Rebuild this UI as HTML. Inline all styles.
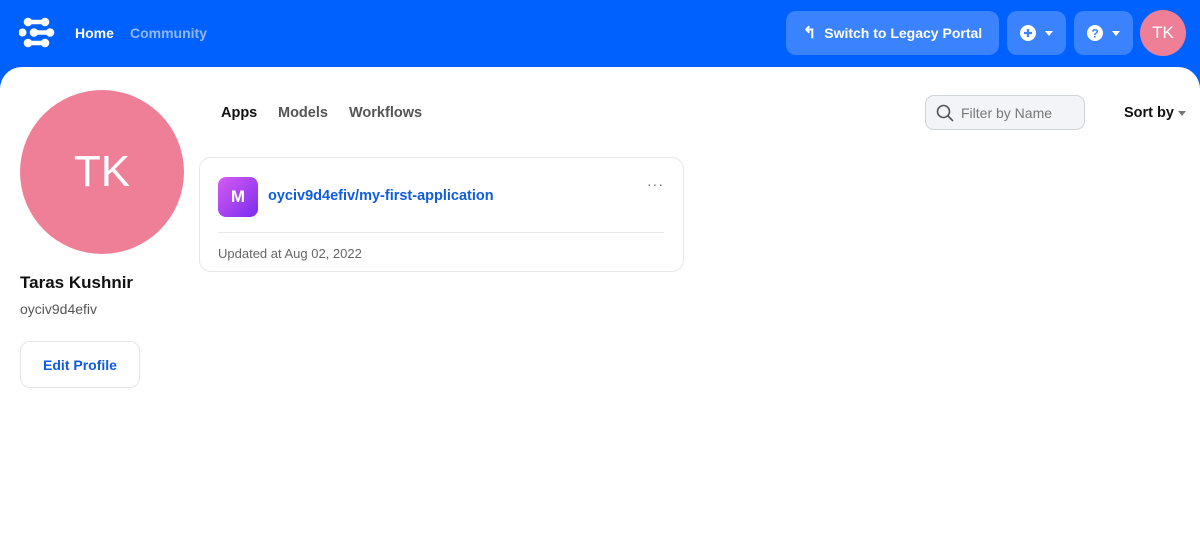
<!DOCTYPE html>
<html><head><style>
*{box-sizing:border-box;margin:0;padding:0}
body{width:1200px;height:560px;overflow:hidden;background:#0061ff;font-family:"Liberation Sans",sans-serif;position:relative}
.main{position:absolute;left:0;top:67px;width:1200px;height:493px;background:#fff;border-radius:22px 22px 0 0}
.a{position:absolute}
.btn{position:absolute;top:11px;height:44px;background:#3b82ff;border-radius:10px;color:#fff;font-weight:bold;font-size:14px;display:flex;align-items:center;justify-content:center}
.caret{width:0;height:0;border-left:4px solid transparent;border-right:4px solid transparent;border-top:5px solid #fff;margin-left:9px}
</style></head><body>
<svg class="a" style="left:19px;top:17px" width="36" height="32" viewBox="0 0 36 32" fill="#fff" stroke="#fff">
<circle cx="9" cy="5" r="3.8"/><circle cx="26" cy="5" r="3.8"/><path d="M9 5H26" stroke-width="4.5"/>
<circle cx="3.5" cy="15.5" r="3.5"/><circle cx="15" cy="15.5" r="3.8"/><circle cx="31" cy="15.5" r="3.8"/><path d="M15 15.5H31" stroke-width="4.5"/>
<circle cx="9" cy="26" r="3.8"/><circle cx="26" cy="26" r="3.8"/><path d="M9 26H26" stroke-width="4.5"/>
</svg>
<div class="a" style="left:75px;top:25px;color:#fff;font-weight:bold;font-size:14px">Home</div>
<div class="a" style="left:130px;top:25px;color:#8fb8ff;font-weight:bold;font-size:14px">Community</div>
<div class="btn" style="left:786px;width:213px"><span style="font-size:16px;margin-right:8px">↰</span>Switch to Legacy Portal</div>
<div class="btn" style="left:1007px;width:59px"><svg width="16" height="16" viewBox="0 0 16 16"><circle cx="8" cy="8" r="8" fill="#fff"/><path d="M8 4v8M4 8h8" stroke="#3b82ff" stroke-width="2.2"/></svg><span class="caret"></span></div>
<div class="btn" style="left:1074px;width:59px"><svg width="16" height="16" viewBox="0 0 16 16"><circle cx="8" cy="8" r="8" fill="#fff"/><text x="8" y="12.5" text-anchor="middle" font-size="12" font-weight="bold" fill="#3b82ff" font-family="Liberation Sans">?</text></svg><span class="caret"></span></div>
<div class="a" style="left:1140px;top:10px;width:46px;height:46px;border-radius:50%;background:#ee7f97;color:#fff;font-size:17px;display:flex;align-items:center;justify-content:center">TK</div>
<div class="main"></div>
<div class="a" style="left:20px;top:90px;width:164px;height:164px;border-radius:50%;background:#ee7f97;color:#fff;font-size:44px;display:flex;align-items:center;justify-content:center">TK</div>
<div class="a" style="left:20px;top:273px;font-size:17px;font-weight:bold;color:#111">Taras Kushnir</div>
<div class="a" style="left:20px;top:301px;font-size:14px;color:#555">oyciv9d4efiv</div>
<div class="a" style="left:20px;top:341px;width:120px;height:47px;border:1px solid #e3e5ea;border-radius:10px;color:#0f5ce0;font-weight:bold;font-size:14px;display:flex;align-items:center;justify-content:center">Edit Profile</div>
<div class="a" style="left:221px;top:105px;font-size:14.5px;font-weight:bold;color:#111">Apps</div>
<div class="a" style="left:278px;top:105px;font-size:14.5px;font-weight:bold;color:#555">Models</div>
<div class="a" style="left:349px;top:105px;font-size:14.5px;font-weight:bold;color:#555">Workflows</div>
<div class="a" style="left:925px;top:95px;width:160px;height:35px;border:1px solid #cfd3da;border-radius:9px;background:#f3f4f7;display:flex;align-items:center;padding-left:10px;color:#777;font-size:14px">
<svg width="18" height="18" viewBox="0 0 18 18" style="margin-right:7px"><circle cx="7.5" cy="7.5" r="6" fill="none" stroke="#555" stroke-width="1.6"/><path d="M12 12l5 5" stroke="#555" stroke-width="1.6"/></svg>Filter by Name</div>
<div class="a" style="left:1124px;top:105px;font-size:14.5px;font-weight:bold;color:#111">Sort by</div>
<div class="a" style="left:1178px;top:111px;border-left:4px solid transparent;border-right:4px solid transparent;border-top:5px solid #777"></div>
<div class="a" style="left:199px;top:157px;width:485px;height:115px;border:1px solid #e5e7eb;border-radius:12px"></div>
<div class="a" style="left:218px;top:177px;width:40px;height:40px;border-radius:8px;background:linear-gradient(135deg,#d65cf0,#7a2cf0);color:#fff;font-weight:bold;font-size:17px;display:flex;align-items:center;justify-content:center">M</div>
<div class="a" style="left:268px;top:188px;font-size:14.5px;font-weight:bold;color:#0f5ce0">oyciv9d4efiv/my-first-application</div>
<div class="a" style="left:647px;top:176px;font-size:14px;color:#666;letter-spacing:1px">···</div>
<div class="a" style="left:218px;top:232px;width:446px;height:1px;background:#e5e7eb"></div>
<div class="a" style="left:218px;top:246px;font-size:13px;color:#666">Updated at Aug 02, 2022</div>
</body></html>
